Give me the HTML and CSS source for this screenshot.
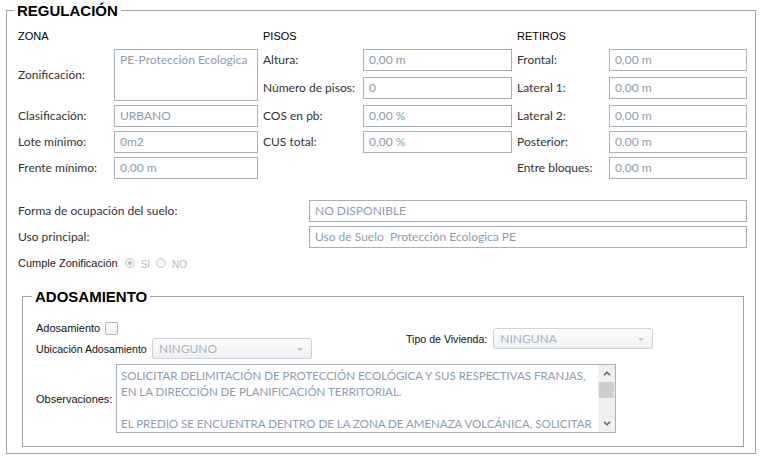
FILE: index.html
```html
<!DOCTYPE html>
<html lang="es">
<head>
<meta charset="utf-8">
<title>Regulación</title>
<link rel="stylesheet" href="styles.css">
</head>
<body>
<fieldset class="panel">
  <legend class="panel-title">REGULACIÓN</legend>
  <div class="cols">
    <div class="col col-zona">
      <div class="head">ZONA</div>
      <div class="lbl span2">Zonificación:</div>
      <div class="box tall">PE-Protección Ecologica</div>
      <div class="lbl">Clasificación:</div><div class="box">URBANO</div>
      <div class="lbl">Lote mínimo:</div><div class="box">0m2</div>
      <div class="lbl">Frente mínimo:</div><div class="box">0,00 m</div>
    </div>
    <div class="col col-pisos">
      <div class="head">PISOS</div>
      <div class="lbl">Altura:</div><div class="box">0,00 m</div>
      <div class="lbl">Número de pisos:</div><div class="box">0</div>
      <div class="lbl">COS en pb:</div><div class="box">0,00 %</div>
      <div class="lbl">CUS total:</div><div class="box">0,00 %</div>
    </div>
    <div class="col col-retiros">
      <div class="head">RETIROS</div>
      <div class="lbl">Frontal:</div><div class="box">0,00 m</div>
      <div class="lbl">Lateral 1:</div><div class="box">0,00 m</div>
      <div class="lbl">Lateral 2:</div><div class="box">0,00 m</div>
      <div class="lbl">Posterior:</div><div class="box">0,00 m</div>
      <div class="lbl">Entre bloques:</div><div class="box">0,00 m</div>
    </div>
  </div>

  <div class="wide">
    <div class="lbl">Forma de ocupación del suelo:</div><div class="box">NO DISPONIBLE</div>
    <div class="lbl">Uso principal:</div><div class="box">Uso de Suelo&nbsp; Protección Ecologica PE</div>
  </div>

  <div class="cumple">
    <span class="cumple-lbl">Cumple Zonificación</span>
    <span class="radio checked"></span><span class="radio-txt">SI</span>
    <span class="radio"></span><span class="radio-txt">NO</span>
  </div>

  <fieldset class="sub">
    <legend class="sub-title">ADOSAMIENTO</legend>
    <div class="sub-body">
      <div class="ados-top">
        <div class="ados-left">
          <div class="row-check"><span>Adosamiento</span><span class="check"></span></div>
          <div class="row-ubic">
            <span class="ubic-lbl">Ubicación Adosamiento</span>
            <div class="select"><span>NINGUNO</span><span class="caret"></span></div>
          </div>
        </div>
        <div class="tipo">
          <span class="tipo-lbl">Tipo de Vivienda:</span>
          <div class="select"><span>NINGUNA</span><span class="caret"></span></div>
        </div>
      </div>
      <div class="obs-row">
        <span class="obs-lbl">Observaciones:</span>
        <div class="obs">
          <div class="obs-text">SOLICITAR DELIMITACIÓN DE PROTECCIÓN ECOLÓGICA Y SUS RESPECTIVAS FRANJAS,<br>EN LA DIRECCIÓN DE PLANIFICACIÓN TERRITORIAL.<br><br>EL PREDIO SE ENCUENTRA DENTRO DE LA ZONA DE AMENAZA VOLCÁNICA, SOLICITAR</div>
          <div class="scroll">
            <div class="sb-btn"><svg width="8" height="5" viewBox="0 0 8 5"><path d="M1 4.3 L4 1.3 L7 4.3" fill="none" stroke="#606060" stroke-width="1.5"/></svg></div>
            <div class="sb-thumb"></div>
            <div class="sb-track"></div>
            <div class="sb-btn"><svg width="8" height="5" viewBox="0 0 8 5"><path d="M1 0.7 L4 3.7 L7 0.7" fill="none" stroke="#606060" stroke-width="1.5"/></svg></div>
          </div>
        </div>
      </div>
    </div>
  </fieldset>
</fieldset>
</body>
</html>
```

FILE: styles.css
```css
* { box-sizing: border-box; }

html, body { background: #fff; }

body {
  margin: 0;
  padding: 2px 7px 0 6px;
  height: 466px;
  overflow: hidden;
  font-family: Lato, "Liberation Sans", Arial, sans-serif;
  font-size: 12px;
  color: #333;
}

.panel {
  margin: 0;
  min-width: 0;
  border: 1px solid #a3a3a3;
  padding: 0 0 6px 0;
}

.panel-title,
.sub-title {
  margin-left: 7px;
  padding: 0 3px;
  font: bold 15px/17px "Liberation Sans", Arial, sans-serif;
  color: #000;
}

.cols {
  display: flex;
  gap: 5px;
  padding-left: 11px;
}

.col {
  display: grid;
  grid-template-rows: 26px 24px 24px 22px 22px 22px;
  row-gap: 4px;
  align-items: start;
}

.col-zona { grid-template-columns: 96px 144px; }
.col-pisos { grid-template-columns: 100px 149px; }
.col-retiros { grid-template-columns: 92px 138px; }

.head {
  grid-column: 1 / -1;
  align-self: end;
  padding-bottom: 2px;
  font: 11px/13px "Liberation Sans", Arial, sans-serif;
  color: #000;
}

.lbl {
  line-height: 22px;
  white-space: nowrap;
  color: #333;
}

.lbl.span2 {
  grid-row: span 2;
  align-self: center;
  line-height: 16px;
}

.box {
  height: 22px;
  border: 1px solid #abb0b8;
  padding: 0 5px;
  line-height: 20px;
  color: #8e9bb0;
  white-space: nowrap;
  overflow: hidden;
  background: #fff;
}

.box.tall {
  grid-row: span 2;
  height: 52px;
  line-height: 16px;
  padding-top: 2px;
  white-space: normal;
}

.wide {
  display: grid;
  grid-template-columns: 291px 438px;
  row-gap: 4px;
  margin: 21px 0 0 11px;
}

.cumple {
  display: flex;
  align-items: center;
  height: 14px;
  margin: 8px 0 0 11px;
  font: 11px "Liberation Sans", Arial, sans-serif;
  color: #222;
}

.cumple-lbl { margin-right: 7px; }

.radio {
  width: 10px;
  height: 10px;
  border: 1px solid #c8c8c8;
  border-radius: 50%;
  background: #f6f6f6;
  display: flex;
  align-items: center;
  justify-content: center;
}

.radio.checked::after {
  content: "";
  width: 4px;
  height: 4px;
  border-radius: 50%;
  background: #bdbdbd;
}

.radio-txt {
  font-size: 10px;
  color: #b9b9b9;
  margin: 2px 6px 0 6px;
}

.sub {
  margin: 18px 11px 0 15px;
  min-width: 0;
  border: 1px solid #a3a3a3;
  padding: 13px 0 13px 0;
}

.sub-title { margin-left: 9px; }

.sub-body { padding-left: 13px; }

.ados-top {
  display: grid;
  grid-template-columns: 370px auto;
  align-items: center;
  font: 11px "Liberation Sans", Arial, sans-serif;
  color: #111;
}

.row-check {
  height: 20px;
  display: flex;
  align-items: center;
  gap: 5px;
}

.check {
  width: 13px;
  height: 13px;
  border: 1px solid #b4b4b4;
  border-radius: 2px;
  background: linear-gradient(#fbfbfb, #f0f0f0);
}

.row-ubic {
  display: flex;
  align-items: center;
  height: 21px;
}

.ubic-lbl { width: 116px; white-space: nowrap; font-size: 10.6px; }

.tipo {
  display: flex;
  align-items: center;
  gap: 6px;
}

.tipo-lbl { white-space: nowrap; font-size: 10.6px; }

.select {
  width: 160px;
  height: 21px;
  border: 1px solid #cfd3d8;
  border-radius: 3px;
  background: linear-gradient(#fdfdfd, #eef0f3);
  display: flex;
  align-items: center;
  justify-content: space-between;
  padding: 0 8px 0 6px;
  font-family: Lato, "Liberation Sans", Arial, sans-serif;
  font-size: 12px;
  color: #aab3c0;
}

.caret {
  width: 0;
  height: 0;
  border-left: 3px solid transparent;
  border-right: 3px solid transparent;
  border-top: 3px solid #c4c8cd;
  margin-top: 2px;
}

.obs-row {
  display: grid;
  grid-template-columns: 80px 500px;
  align-items: center;
  margin-top: 5px;
  font: 11px "Liberation Sans", Arial, sans-serif;
  color: #111;
}

.obs {
  height: 69px;
  border: 1px solid #abb0b8;
  display: flex;
  background: #fff;
}

.obs-text {
  flex: 1;
  padding: 3px 4px;
  font-family: Lato, "Liberation Sans", Arial, sans-serif;
  font-size: 11.5px;
  line-height: 16px;
  color: #8e9bb0;
  white-space: nowrap;
  overflow: hidden;
}

.scroll {
  width: 17px;
  background: #f0f0f0;
  display: flex;
  flex-direction: column;
}

.sb-btn {
  height: 17px;
  display: flex;
  align-items: center;
  justify-content: center;
}

.sb-thumb {
  height: 16px;
  margin: 0 1px;
  background: #cdcdcd;
}

.sb-track { flex: 1; }
```
